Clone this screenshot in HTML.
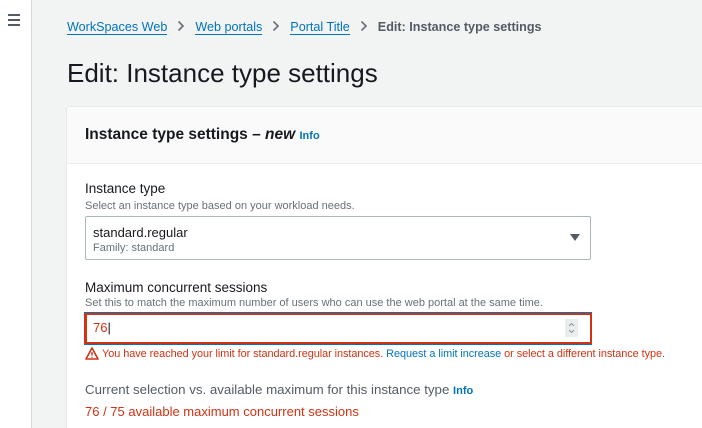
<!DOCTYPE html>
<html><head><style>
*{margin:0;padding:0;box-sizing:border-box}
html,body{width:702px;height:428px;overflow:hidden}
body{background:#f2f3f3;font-family:"Liberation Sans",sans-serif;position:relative;color:#16191f}
.nav{position:absolute;left:0;top:0;width:32px;height:428px;background:#fff;border-right:1px solid #d5dbdb}
.ham{position:absolute;left:8px;top:14px;width:12px}
.ham div{height:2px;background:#545b64;margin-bottom:3px}
.a{position:absolute;white-space:nowrap}
.bc{top:20px;left:67px;font-size:13px;color:#0073bb}
.bc u{text-decoration:none;border-bottom:1px solid #0073bb}
.bc svg{margin:0 10px;vertical-align:-1px}
.bc b{color:#545b64}
h1{position:absolute;left:67px;top:58px;font-size:26px;font-weight:normal;color:#16191f}
.card{position:absolute;left:67px;top:106px;width:660px;height:340px;background:#fff;box-shadow:0 1px 1px rgba(0,22,40,.2);border-top:1px solid #eaeded}
.hd{height:57px;background:#fafafa;border-bottom:1px solid #eaeded}
.info{color:#0073bb;font-size:11px;font-weight:bold;font-style:normal}
.lbl{font-size:13.5px;color:#16191f}
.desc{font-size:11px;color:#687078}
.sel{position:absolute;left:85px;top:216px;width:506px;height:44px;border:1px solid #aab7b8;border-radius:2px;background:#fff}
.inp{position:absolute;left:84px;top:313px;width:508px;height:31px;border:2px solid #d13212;border-left:3px solid #d13212;box-shadow:0 -1px 0 #0073bb,0 1px 0 #0073bb;background:#fff}
.red{color:#d13212}
</style></head><body>
<div class="nav"><div class="ham"><div></div><div></div><div></div></div></div>
<div class="a bc" style="font-size:12.6px"><u>WorkSpaces Web</u><svg width="8" height="12"><path d="M1.5 1.5L6 6L1.5 10.5" fill="none" stroke="#687078" stroke-width="1.6"/></svg><u>Web portals</u><svg width="8" height="12"><path d="M1.5 1.5L6 6L1.5 10.5" fill="none" stroke="#687078" stroke-width="1.6"/></svg><u>Portal Title</u><svg width="8" height="12"><path d="M1.5 1.5L6 6L1.5 10.5" fill="none" stroke="#687078" stroke-width="1.6"/></svg><b>Edit: Instance type settings</b></div>
<h1>Edit: Instance type settings</h1>
<div class="card"><div class="hd"></div></div>
<div class="a" style="left:85px;top:126px;font-size:15.5px;font-weight:bold">Instance type settings – <i>new</i> <span class="info">Info</span></div>
<div class="a lbl" style="left:85px;top:181px">Instance type</div>
<div class="a desc" style="left:85px;top:200px">Select an instance type based on your workload needs.</div>
<div class="sel">
<div class="a" style="left:7px;top:8px;font-size:13px">standard.regular</div>
<div class="a desc" style="left:7px;top:25px">Family: standard</div>
<svg class="a" style="left:484px;top:17px" width="10" height="8"><path d="M0 0H10L5 7Z" fill="#545b64"/></svg>
</div>
<div class="a lbl" style="left:85px;top:280px">Maximum concurrent sessions</div>
<div class="a desc" style="left:85px;top:297px">Set this to match the maximum number of users who can use the web portal at the same time.</div>
<div class="inp">
<div class="a" style="left:6px;top:5px;font-size:13px;color:#d13212">76<span style="color:#16191f">|</span></div>
<svg class="a" style="left:478px;top:4px" width="13" height="18"><rect width="13" height="18" fill="#eaeded"/><path d="M4 7L6.5 4.5L9 7M4 11L6.5 13.5L9 11" fill="none" stroke="#879596" stroke-width="1"/></svg>
</div>
<svg class="a" style="left:85px;top:347px" width="14" height="13"><path d="M7 1L13 12H1Z" fill="none" stroke="#d13212" stroke-width="1.6" stroke-linejoin="round"/><path d="M7 5v3.5M7 9.8v1" stroke="#d13212" stroke-width="1.4"/></svg>
<div class="a red" style="left:102px;top:348px;font-size:10.9px;letter-spacing:-0.05px">You have reached your limit for standard.regular instances. <span style="color:#0073bb">Request a limit increase</span> or select a different instance type.</div>
<div class="a lbl" style="left:85px;top:382px;color:#545b64;font-size:13.3px">Current selection vs. available maximum for this instance type <span class="info">Info</span></div>
<div class="a red" style="left:85px;top:404px;font-size:13px">76 / 75 available maximum concurrent sessions</div>
</body></html>
